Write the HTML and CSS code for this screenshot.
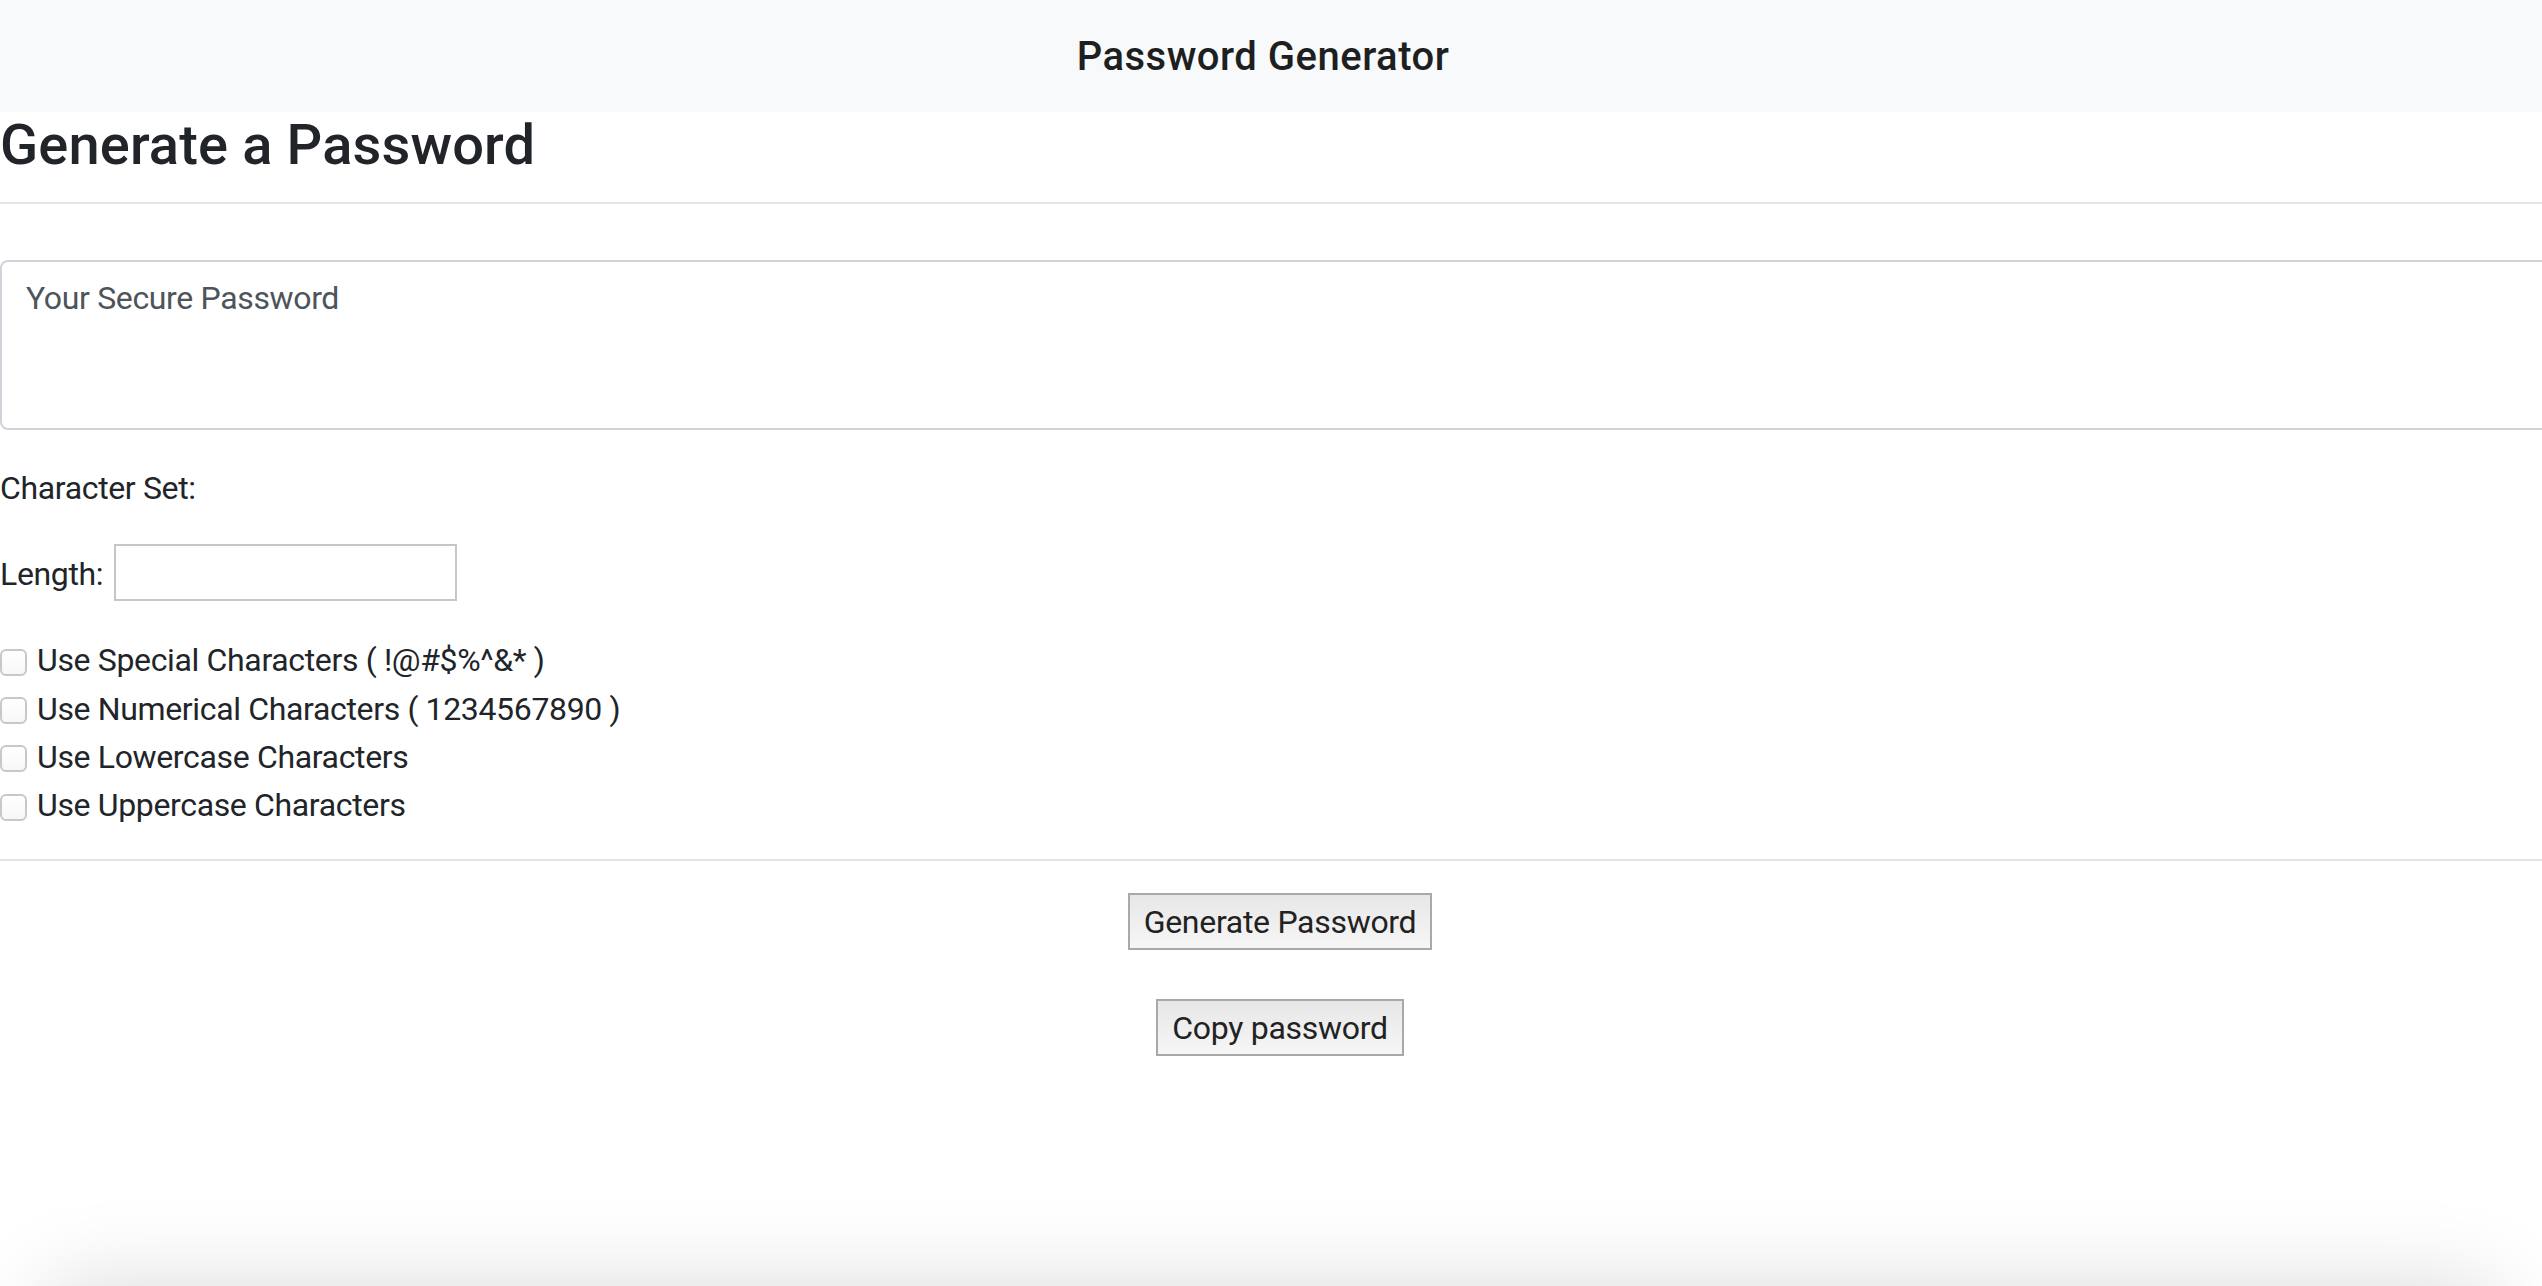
FILE: index.html
```html
<!DOCTYPE html>
<html lang="en">
<head>
<meta charset="utf-8">
<title>Password Generator</title>
<link rel="stylesheet" href="styles.css">
</head>
<body>
<div class="screen">
  <header class="topbar">
    <h5 class="brand">Password Generator</h5>
  </header>
  <main class="generator">
    <h3 class="title">Generate a Password</h3>
    <hr class="rule">
    <textarea class="output" placeholder="Your Secure Password" readonly></textarea>
    <p class="set-label">Character Set:</p>
    <div class="length-row">
      <label for="length" class="length-label">Length:</label>
      <input id="length" class="length-input" type="text">
    </div>
    <ul class="options">
      <li class="option"><input type="checkbox" class="check" id="special"><label for="special">Use Special Characters ( !@#$%^&amp;* )</label></li>
      <li class="option"><input type="checkbox" class="check" id="numeric"><label for="numeric">Use Numerical Characters ( 1234567890 )</label></li>
      <li class="option"><input type="checkbox" class="check" id="lower"><label for="lower">Use Lowercase Characters</label></li>
      <li class="option"><input type="checkbox" class="check" id="upper"><label for="upper">Use Uppercase Characters</label></li>
    </ul>
    <hr class="rule rule-bottom">
    <div class="actions">
      <button class="btn" type="button">Generate Password</button>
      <button class="btn" type="button">Copy password</button>
    </div>
  </main>
  <div class="below"></div>
</div>
</body>
</html>
```
FILE: styles.css
```css
html, body {
  margin: 0;
  padding: 0;
}

body {
  font-family: Roboto, "Liberation Sans", Arial, sans-serif;
  font-size: 32px;
  line-height: 1.5;
  letter-spacing: -0.35px;
  color: #212529;
  background: #fff;
}

.screen {
  height: 100vh;
  overflow: hidden;
}

.topbar {
  height: 112px;
  background: #f8f9fa;
  display: flex;
  align-items: center;
  justify-content: center;
}

.brand {
  margin: 0 16px 0 0;
  padding-top: 2px;
  font-size: 40px;
  font-weight: 500;
  line-height: 1.2;
  letter-spacing: 0.5px;
  color: #1d1f21;
}

.generator {
  min-height: calc(100vh - 112px);
}

.title {
  margin: 0 0 23px;
  font-size: 56px;
  font-weight: 500;
  line-height: 1.2;
  letter-spacing: 0.15px;
}

.rule {
  margin: 0;
  border: 0;
  border-top: 2px solid #e4e4e4;
}

.output {
  display: block;
  box-sizing: content-box;
  width: 100%;
  height: 142px;
  margin: 56px 0 0;
  padding: 12px 24px;
  border: 2px solid #ced4da;
  border-radius: 8px;
  font-family: inherit;
  font-size: 32px;
  line-height: 1.5;
  letter-spacing: -0.35px;
  color: #495057;
  background: #fff;
  resize: none;
  outline: none;
}

.output::placeholder {
  color: #4d545a;
  opacity: 1;
}

.set-label {
  margin: 34px 0 0;
}

.length-row {
  display: flex;
  align-items: center;
  gap: 11px;
  margin-top: 32px;
}

.length-label {
  padding-top: 3px;
}

.length-input {
  box-sizing: border-box;
  width: 343px;
  height: 57px;
  margin: 0;
  padding: 0 6px;
  border: 2px solid #c6c6c6;
  background: #fff;
  font-family: inherit;
  font-size: 26px;
  outline: none;
}

.options {
  list-style: none;
  margin: 35px 0 0;
  padding: 0;
}

.option {
  display: flex;
  align-items: center;
  height: 48.3px;
}

.check {
  appearance: none;
  -webkit-appearance: none;
  flex: none;
  box-sizing: border-box;
  width: 27px;
  height: 27px;
  margin: 4px 10px 0 0;
  border: 2px solid #c8c8c8;
  border-radius: 6px;
  background: linear-gradient(#ffffff, #f7f7f7);
}

.rule-bottom {
  margin-top: 30px;
}

.actions {
  display: flex;
  flex-direction: column;
  align-items: center;
  gap: 49px;
  margin-top: 32px;
  padding-left: 18px;
}

.btn {
  box-sizing: border-box;
  height: 57px;
  margin: 0;
  padding: 0 14px;
  border: 2px solid #a9a9a9;
  border-radius: 0;
  background: linear-gradient(#e7e7e7, #f6f6f6);
  font-family: inherit;
  font-size: 32px;
  line-height: 1;
  letter-spacing: -0.3px;
  color: #222;
}

.below {
  height: 200px;
  margin: 0 42px;
  border-radius: 32px;
  background: #fff;
  box-shadow: 0 0 90px rgba(0, 0, 0, 0.15);
}
```
